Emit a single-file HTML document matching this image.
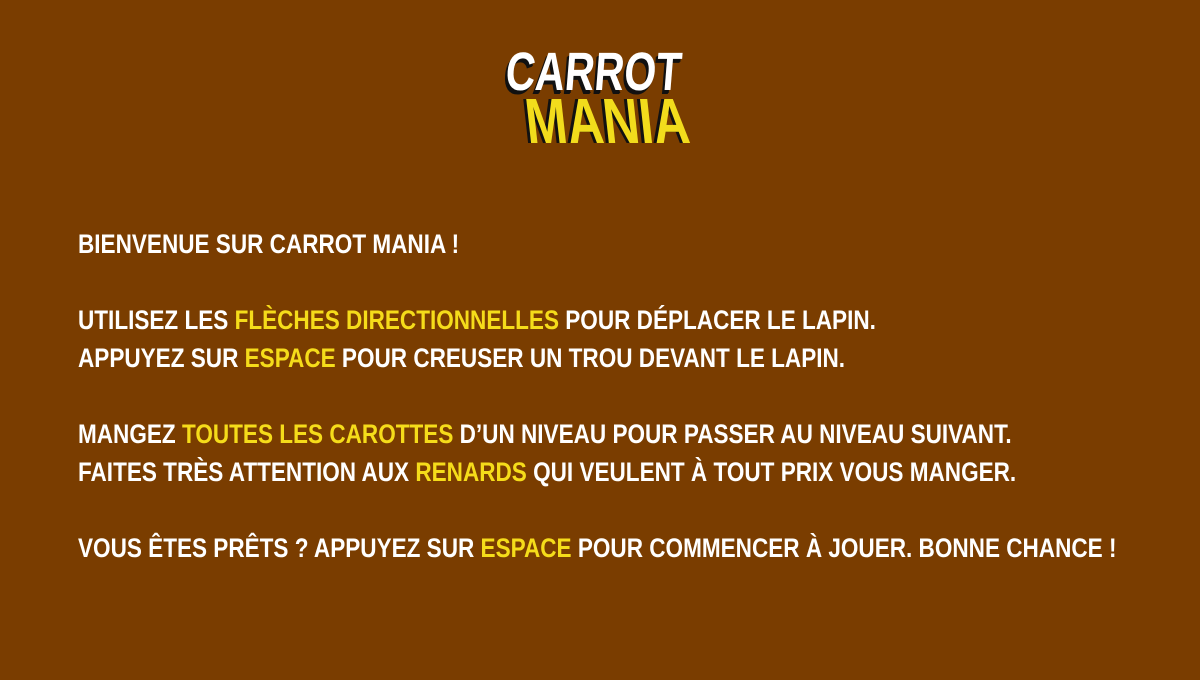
<!DOCTYPE html>
<html><head><meta charset="utf-8"><style>
html,body{margin:0;padding:0}
body{width:1200px;height:680px;background:#7a3d00;overflow:hidden;position:relative;font-family:"Liberation Sans",sans-serif;}
.logo{position:absolute;left:508px;top:44px;width:195px;font-weight:bold;}
.logo .a{position:absolute;left:0;top:2px;font-size:54px;color:#fff;transform-origin:0 0;transform:scaleX(0.76) skewX(-6deg);text-shadow:-3px 4px 0 #111,-2px 3px 0 #111;line-height:52px}
.logo .b{position:absolute;left:14px;top:46px;font-size:64px;color:#f2dc1c;transform-origin:0 0;transform:scaleX(0.78) skewX(8deg);text-shadow:-4px 0 0 #111,-2px 0 0 #111;line-height:62px}
.txt{position:absolute;left:78px;top:225px;color:#fff;font-weight:bold;font-size:27px;line-height:38px;white-space:pre;transform-origin:0 0;transform:scaleX(0.835);}
.y{color:#f5dc1a}
</style></head><body>
<div class="logo"><div class="a">CARROT</div><div class="b">MANIA</div></div>
<div class="txt">BIENVENUE SUR CARROT MANIA !

UTILISEZ LES <span class="y">FLÈCHES DIRECTIONNELLES</span> POUR DÉPLACER LE LAPIN.
APPUYEZ SUR <span class="y">ESPACE</span> POUR CREUSER UN TROU DEVANT LE LAPIN.

MANGEZ <span class="y">TOUTES LES CAROTTES</span> D’UN NIVEAU POUR PASSER AU NIVEAU SUIVANT.
FAITES TRÈS ATTENTION AUX <span class="y">RENARDS</span> QUI VEULENT À TOUT PRIX VOUS MANGER.

VOUS ÊTES PRÊTS ? APPUYEZ SUR <span class="y">ESPACE</span> POUR COMMENCER À JOUER. BONNE CHANCE !</div>
</body></html>
